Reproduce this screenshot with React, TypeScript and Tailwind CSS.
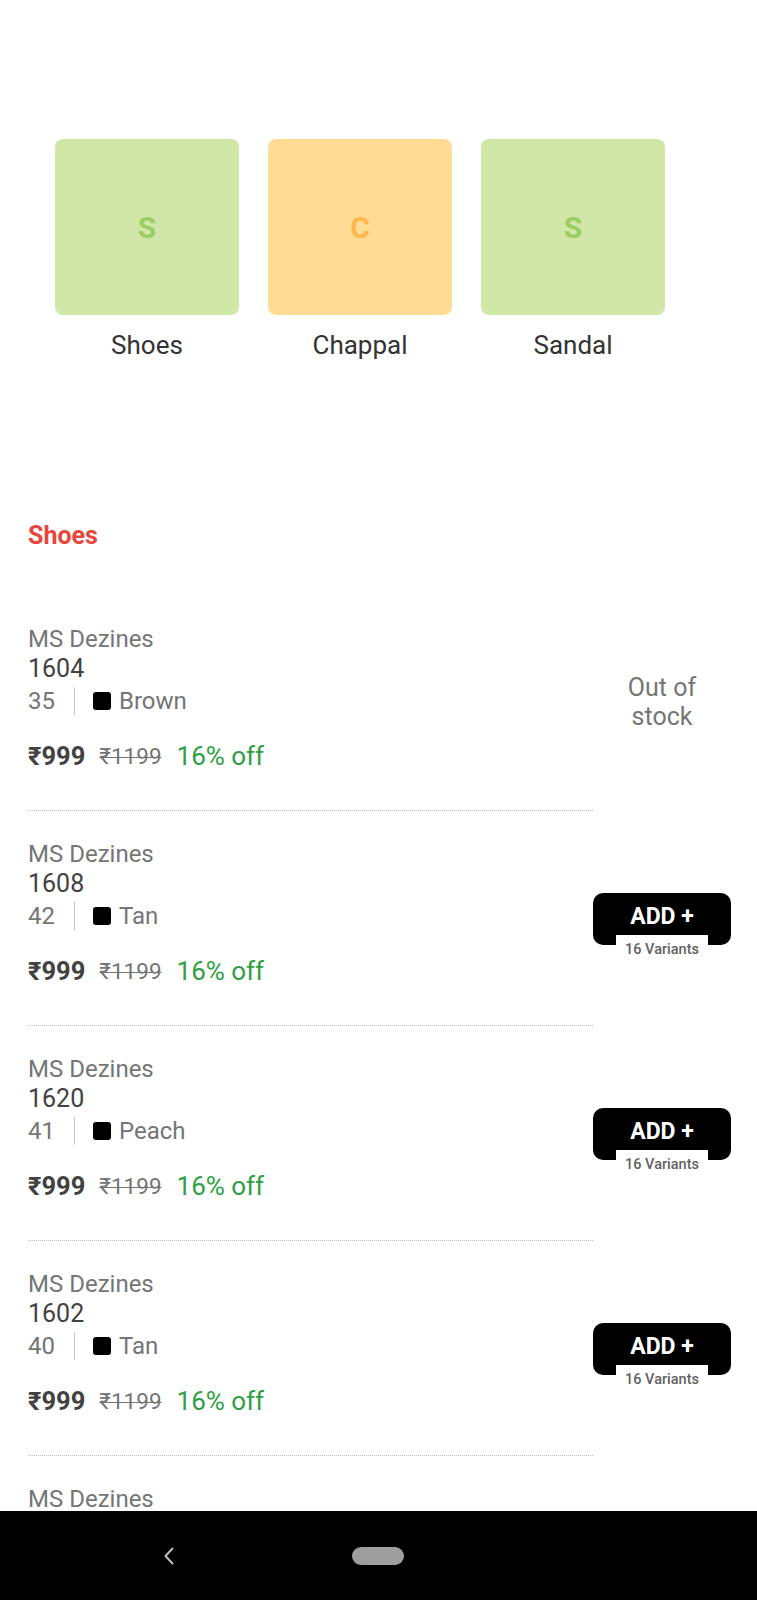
import React from "react";

type Item = { code: string; size: string; color: string; stock: boolean };

const items: Item[] = [
  { code: "1604", size: "35", color: "Brown", stock: false },
  { code: "1608", size: "42", color: "Tan", stock: true },
  { code: "1620", size: "41", color: "Peach", stock: true },
  { code: "1602", size: "40", color: "Tan", stock: true },
  { code: "1610", size: "39", color: "Black", stock: true },
];

function Tile({ letter, label, tone }: { letter: string; label: string; tone: "green" | "orange" }) {
  return (
    <div className="flex w-[184px] flex-col items-center">
      <div
        className={
          tone === "green"
            ? "flex h-[176px] w-[184px] items-center justify-center rounded-[8px] bg-[#d1e7a7]"
            : "flex h-[176px] w-[184px] items-center justify-center rounded-[8px] bg-[#ffdc94]"
        }
      >
        <span
          className={
            tone === "green"
              ? "text-[30px] font-bold text-[#9ccc65]"
              : "text-[30px] font-bold text-[#ffb74d]"
          }
        >
          {letter}
        </span>
      </div>
      <div className="mt-[15px] text-[26px] leading-[30px] text-[#333333]">{label}</div>
    </div>
  );
}

function Product({ item }: { item: Item }) {
  return (
    <div className="flex">
      <div className="flex-1 border-b border-dotted border-[#bdbdbd] pb-[39px] pt-[29px]">
        <div className="text-[24px] leading-[29px] text-[#757575]">MS Dezines</div>
        <div className="text-[25px] leading-[29px] text-[#424242]">{item.code}</div>
        <div className="mt-[3px] flex h-[30px] items-center">
          <span className="text-[24px] leading-[30px] text-[#757575]">{item.size}</span>
          <span className="ml-[19px] h-[28px] w-px bg-[#c4c4c4]" />
          <span className="ml-[18px] h-[18px] w-[18px] rounded-[3px] bg-black" />
          <span className="ml-[8px] text-[24px] leading-[30px] text-[#757575]">{item.color}</span>
        </div>
        <div className="mt-[25px] flex h-[30px] items-center">
          <span className="text-[25.5px] font-bold leading-[30px] text-[#424242]">₹999</span>
          <span className="ml-[14px] text-[22.5px] leading-[30px] text-[#757575] line-through decoration-1">₹1199</span>
          <span className="ml-[15px] text-[26px] leading-[30px] text-[#2f9e44]">16% off</span>
        </div>
      </div>
      <div className="flex w-[138px] items-center justify-center pb-[39px] pt-[29px]">
        {item.stock ? (
          <div className="pt-[10px]">
            <div className="relative flex h-[52px] w-[138px] items-center justify-center rounded-[10px] bg-black">
              <span className="-mt-[2px] text-[23px] font-bold text-white">ADD +</span>
              <div className="absolute left-[23px] top-[42px] flex h-[30px] w-[92px] items-center justify-center bg-white">
                <span className="text-[14.5px] font-medium text-[#616161]">16 Variants</span>
              </div>
            </div>
          </div>
        ) : (
          <div className="pt-[7px] text-center text-[25px] leading-[29px] text-[#757575]">
            Out of
            <br />
            stock
          </div>
        )}
      </div>
    </div>
  );
}

export default function App() {
  return (
    <div
      className="flex h-[1600px] w-[757px] flex-col overflow-hidden bg-white"
      style={{ fontFamily: "Roboto, 'Noto Sans', sans-serif" }}
    >
      <div className="flex-1 overflow-hidden">
        <div className="flex gap-[29px] pl-[55px] pt-[139px]">
          <Tile letter="S" label="Shoes" tone="green" />
          <Tile letter="C" label="Chappal" tone="orange" />
          <Tile letter="S" label="Sandal" tone="green" />
        </div>
        <div className="px-[28px] pr-[26px]">
          <div className="mt-[161px] text-[25px] font-bold leading-[30px] text-[#e8453c]">Shoes</div>
          <div className="mt-[45px]">
            {items.map((it, i) => (
              <Product key={i} item={it} />
            ))}
          </div>
        </div>
      </div>
      <div className="flex h-[89px] shrink-0 items-center bg-black">
        <div className="ml-[163px] flex h-[18px] w-[11px] items-center">
          <svg width="11" height="18" viewBox="0 0 11 18" fill="none">
            <path d="M9.5 1.5 L2.5 9 L9.5 16.5" stroke="#bdbdbd" strokeWidth="2" strokeLinecap="round" strokeLinejoin="round" />
          </svg>
        </div>
        <div className="ml-[178px] h-[18px] w-[52px] rounded-full bg-[#9e9e9e]" />
      </div>
    </div>
  );
}
